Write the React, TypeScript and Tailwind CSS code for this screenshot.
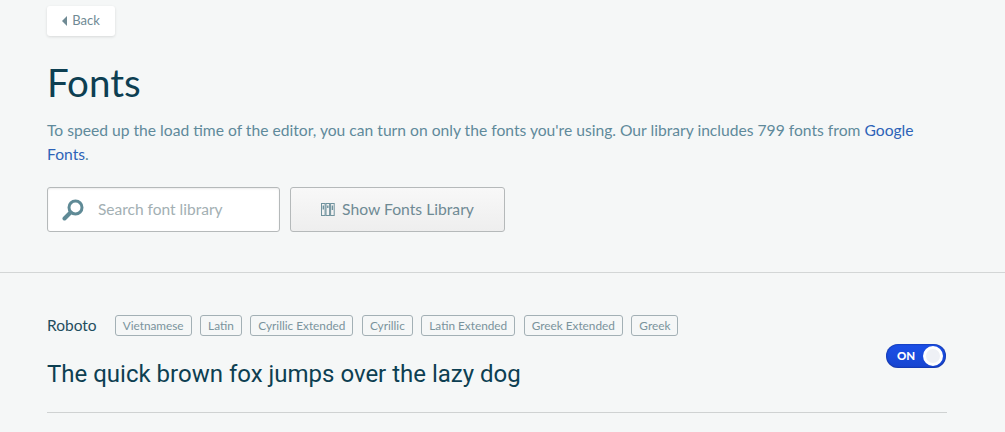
import { useState } from "react"

const subsets = ["Vietnamese", "Latin", "Cyrillic Extended", "Cyrillic", "Latin Extended", "Greek Extended", "Greek"]

const SearchIcon = () => (
    <svg width="24" height="22" viewBox="0 0 24 22" fill="none" className="shrink-0">
        <circle cx="14.5" cy="8.5" r="6.5" stroke="#5f8a96" strokeWidth="3" />
        <path d="M9.5 13.5L3.5 19.5" stroke="#5f8a96" strokeWidth="4" strokeLinecap="round" />
    </svg>
)

const LibraryIcon = () => (
    <svg width="14" height="13" viewBox="0 0 14 13" fill="none" className="shrink-0">
        <rect x="0.5" y="0.5" width="3.6" height="12" stroke="#6f929d" />
        <rect x="5" y="0.5" width="3.6" height="12" stroke="#6f929d" />
        <rect x="9.6" y="0.5" width="3.6" height="12" stroke="#6f929d" />
        <path d="M2.3 2.5V6.5M6.8 2.5V5M11.4 2.5V7" stroke="#6f929d" strokeWidth="1.4" />
    </svg>
)

export default function App() {
    const [on, setOn] = useState(true)
    return (
        <div className="h-[432px] w-full overflow-hidden bg-[#f5f7f7] font-['Lato','Liberation_Sans',sans-serif]">
            <div className="pt-[6px] pr-[58px] pl-[47px]">
                <button className="flex h-[30px] w-[68px] items-center justify-center gap-[5px] rounded-[3px] bg-white text-[13px] text-[#6f8a94] shadow-[0_1px_3px_rgba(0,0,0,0.12)]">
                    <span className="h-0 w-0 border-y-[5px] border-r-[5px] border-y-transparent border-r-[#6f8a94]" />
                    Back
                </button>
                <h1 className="mt-[24px] text-[38.5px] leading-[44px] font-normal text-[#0d3f52]">Fonts</h1>
                <p className="mt-[14px] w-[880px] text-[15.65px] leading-[24px] text-[#5f8a9b]">
                    To speed up the load time of the editor, you can turn on only the fonts you're using. Our library includes 799 fonts from <a className="text-[#2e63b8]">Google Fonts</a>.
                </p>
                <div className="mt-[21px] flex gap-[10px]">
                    <label className="flex h-[45px] w-[233px] items-center gap-[13px] rounded-[3px] border border-[#b5b9ba] bg-white pl-[13px] shadow-[inset_0_1px_2px_rgba(0,0,0,0.08)]">
                        <SearchIcon />
                        <input
                            placeholder="Search font library"
                            className="w-[170px] bg-transparent text-[15.5px] outline-none placeholder:text-[#a3afb3]"
                        />
                    </label>
                    <button className="flex h-[45px] w-[215px] items-center justify-center gap-[7px] rounded-[3px] border border-[#b5b9ba] bg-gradient-to-b from-[#f8f8f8] to-[#eeeeee] text-[15.7px] text-[#6f8a94]">
                        <LibraryIcon />
                        Show Fonts Library
                    </button>
                </div>
            </div>

            <div className="mt-[40px] border-t border-[#d3d6d6] pt-[42px] pr-[58px] pl-[47px]">
                <div className="flex justify-between border-b border-[#cfd2d2] pb-[22px]">
                    <div>
                        <div className="flex h-[21px] items-center">
                            <span className="mr-[18px] text-[15.5px] text-[#1f4d5e]">Roboto</span>
                            <div className="flex gap-[8.5px]">
                                {subsets.map(s => (
                                    <span key={s} className="flex h-[21px] items-center rounded-[3px] border border-[#a3b0b5] px-[7px] text-[11.8px] text-[#7a939c]">
                                        {s}
                                    </span>
                                ))}
                            </div>
                        </div>
                        <div className="mt-[22px] font-['Roboto',sans-serif] text-[24px] leading-[32px] font-normal text-[#0d3f52]">
                            The quick brown fox jumps over the lazy dog
                        </div>
                    </div>
                    <button
                        onClick={() => setOn(!on)}
                        className="mr-[1px] mb-[22px] flex h-[24px] w-[60px] items-center justify-between self-end rounded-full bg-gradient-to-b from-[#1b50e8] to-[#1745d0] pr-[3px] pl-[11px] text-[11.5px] font-black text-white shadow-[inset_0_0_2px_rgba(0,0,40,0.6)]"
                    >
                        {on ? "ON" : "OFF"}
                        <span className="h-[20px] w-[20px] rounded-full border-[3px] border-white bg-[#eef0f5]" />
                    </button>
                </div>
            </div>
        </div>
    )
}
